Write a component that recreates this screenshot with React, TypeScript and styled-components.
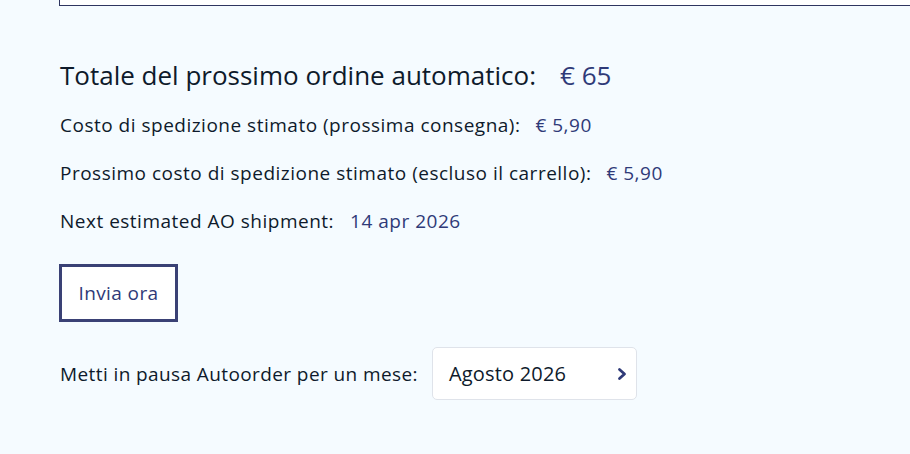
import styled, { createGlobalStyle } from "styled-components";

const GlobalStyle = createGlobalStyle`
  html, body {
    margin: 0;
    padding: 0;
    background: #f5fbff;
  }
  body {
    font-family: "Open Sans", "Noto Sans", sans-serif;
    color: #0e1a2b;
  }
`;

const Page = styled.div`
  padding-left: 59px;
  min-height: 454px;
  box-sizing: border-box;
`;

const PanelBottom = styled.div`
  height: 5px;
  border-left: 1px solid #2e3560;
  border-bottom: 1px solid #2e3560;
  background: #fff;
`;

const Summary = styled.div`
  display: flex;
  flex-direction: column;
  padding-top: 53px;
`;

const Title = styled.h2`
  margin: 0 0 22px 1px;
  font-size: 26px;
  font-weight: 400;
  line-height: 32px;
`;

const Row = styled.div`
  margin-left: 1px;
  font-size: 19px;
  letter-spacing: 0.5px;
  line-height: 24px;
  margin-bottom: 24px;
`;

const Value = styled.span<{ $gap?: number }>`
  color: #2f3a78;
  margin-left: ${({ $gap }) => $gap ?? 15}px;
`;

const SendButton = styled.button`
  align-self: flex-start;
  width: 119px;
  height: 58px;
  margin-top: 7px;
  background: #fff;
  border: 3px solid #3a4175;
  color: #2f3a78;
  font-family: inherit;
  font-size: 19px;
  letter-spacing: 0.4px;
  cursor: pointer;
`;

const PauseRow = styled.div`
  display: flex;
  align-items: center;
  gap: 14px;
  margin-top: 25px;
  margin-left: 1px;
  font-size: 19px;
  letter-spacing: 0.4px;
`;

const Select = styled.div`
  display: flex;
  align-items: center;
  justify-content: space-between;
  width: 205px;
  height: 53px;
  box-sizing: border-box;
  padding: 0 8px 0 16px;
  background: #fff;
  border: 1px solid #dfe3ea;
  border-radius: 5px;
  font-size: 20px;
  letter-spacing: 0.2px;
  color: #0e1a2b;
`;

export default function App() {
  return (
    <>
      <GlobalStyle />
      <Page>
        <PanelBottom />
        <Summary>
          <Title>
            Totale del prossimo ordine automatico:<Value $gap={24}>€ 65</Value>
          </Title>
          <Row>
            Costo di spedizione stimato (prossima consegna):<Value>€ 5,90</Value>
          </Row>
          <Row>
            Prossimo costo di spedizione stimato (escluso il carrello):<Value>€ 5,90</Value>
          </Row>
          <Row>
            Next estimated AO shipment:<Value $gap={16}>14 apr 2026</Value>
          </Row>
          <SendButton>Invia ora</SendButton>
          <PauseRow>
            Metti in pausa Autoorder per un mese:
            <Select>
              Agosto 2026
              <svg width="12" height="14" viewBox="0 0 12 14">
                <path d="M3.5 2.5 L8.5 7 L3.5 11.5" fill="none" stroke="#2f3a78" strokeWidth="2.8" strokeLinecap="round" strokeLinejoin="round" />
              </svg>
            </Select>
          </PauseRow>
        </Summary>
      </Page>
    </>
  );
}
